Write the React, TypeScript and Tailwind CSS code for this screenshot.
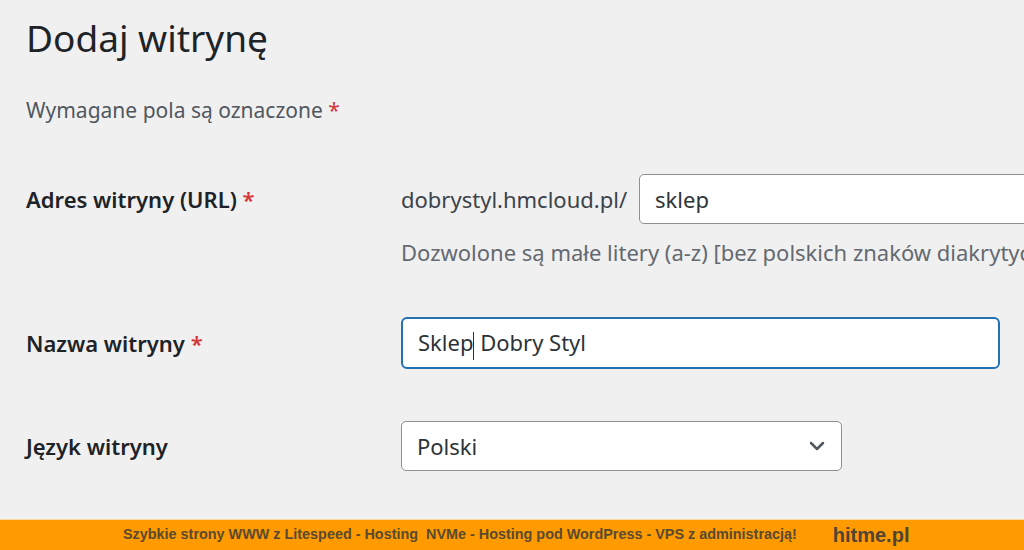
import { ChevronDown } from "lucide-react";

const Req = () => <span className="text-[#d63638]"> *</span>;

const App = () => {
  return (
    <div className="w-[1024px] h-[550px] bg-[#f0f0f1] flex flex-col overflow-hidden font-['Noto_Sans',sans-serif]">
      <div className="flex-1 pl-[26px] pt-[13px] overflow-hidden">
        <h1 className="text-[37px] leading-[50px] text-[#1d2327] font-normal">Dodaj witrynę</h1>
        <p className="mt-[32px] text-[21px] leading-[30px] text-[#50575e]">
          Wymagane pola są oznaczone<Req />
        </p>

        <div className="mt-[49px] grid grid-cols-[375px_1fr] items-center">
          <label className="text-[22px] font-semibold text-[#1d2327]">
            Adres witryny (URL)<Req />
          </label>
          <div className="flex items-center gap-[12px] whitespace-nowrap">
            <span className="text-[22px] text-[#3c434a]">dobrystyl.hmcloud.pl/</span>
            <div className="w-[500px] h-[50px] shrink-0 bg-white border border-[#8c8f94] rounded-[5px] px-[15px] flex items-center text-[22px] text-[#2c3338]">
              sklep
            </div>
          </div>
          <div />
          <p className="mt-[11px] text-[22px] leading-[34px] text-[#646970] whitespace-nowrap overflow-hidden">
            Dozwolone są małe litery (a-z) [bez polskich znaków diakrytycznych], cyfry i myślniki.
          </p>

          <label className="mt-[48px] text-[22px] font-semibold text-[#1d2327]">
            Nazwa witryny<Req />
          </label>
          <div className="mt-[48px] w-[599px] h-[52px] bg-white border-2 border-[#2271b1] rounded-[6px] px-[15px] flex items-center text-[22px] text-[#2c3338]">
            <span className="whitespace-pre">
              Sklep<span className="inline-block w-px h-[28px] bg-[#2c3338] align-middle" /> Dobry Styl
            </span>
          </div>

          <label className="mt-[52px] text-[22px] font-semibold text-[#1d2327]">Język witryny</label>
          <div className="mt-[52px] w-[441px] h-[50px] bg-white border border-[#8c8f94] rounded-[5px] pl-[15px] pr-[12px] flex items-center justify-between text-[22px] text-[#2c3338]">
            <span>Polski</span>
            <ChevronDown size={24} strokeWidth={2.5} className="text-[#50575e]" />
          </div>
        </div>
      </div>

      <div className="h-[31px] shrink-0 bg-[#ff9a00] border-t border-[#f7d9a6] flex items-center font-['Liberation_Sans',sans-serif]">
        <span className="ml-[123px] text-[14.4px] font-bold text-[#5a4a30] whitespace-pre">
          Szybkie strony WWW z Litespeed - Hosting  NVMe - Hosting pod WordPress - VPS z administracją!
        </span>
        <span className="ml-[36px] text-[20px] font-bold text-[#4f4535]">hitme.pl</span>
      </div>
    </div>
  );
};

export default App;
